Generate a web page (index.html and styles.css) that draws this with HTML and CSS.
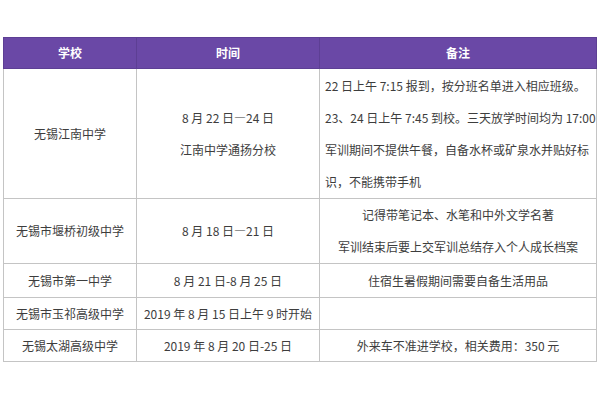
FILE: index.html
```html
<!DOCTYPE html>
<html lang="zh-CN">
<head>
<meta charset="utf-8">
<link rel="stylesheet" href="styles.css">
</head>
<body>
<table class="sched">
  <colgroup>
    <col class="c1"><col class="c2"><col class="c3">
  </colgroup>
  <thead>
    <tr class="head"><th>学校</th><th>时间</th><th>备注</th></tr>
  </thead>
  <tbody>
    <tr class="r1">
      <td>无锡江南中学</td>
      <td class="multi">8 月 22 日—24 日<br>江南中学通扬分校</td>
      <td class="multi left">22 日上午 7:15 报到，按分班名单进入相应班级。<br>23、24 日上午 7:45 到校。三天放学时间均为 17:00<br>军训期间不提供午餐，自备水杯或矿泉水并贴好标<br>识，不能携带手机</td>
    </tr>
    <tr class="r2">
      <td>无锡市堰桥初级中学</td>
      <td>8 月 18 日—21 日</td>
      <td class="multi">记得带笔记本、水笔和中外文学名著<br>军训结束后要上交军训总结存入个人成长档案</td>
    </tr>
    <tr class="r3">
      <td>无锡市第一中学</td>
      <td>8 月 21 日-8 月 25 日</td>
      <td>住宿生暑假期间需要自备生活用品</td>
    </tr>
    <tr class="r4">
      <td>无锡市玉祁高级中学</td>
      <td>2019 年 8 月 15 日上午 9 时开始</td>
      <td></td>
    </tr>
    <tr class="r5">
      <td>无锡太湖高级中学</td>
      <td>2019 年 8 月 20 日-25 日</td>
      <td>外来车不准进学校，相关费用：350 元</td>
    </tr>
  </tbody>
</table>
</body>
</html>
```
FILE: styles.css
```css
html, body {
  margin: 0;
  background: #ffffff;
}
body {
  padding: 37px 4px 0 3px;
  font-family: "Noto Sans CJK SC", "Noto Sans", sans-serif;
  font-size: 12px;
  color: #3d3d3d;
}
.sched {
  border-collapse: collapse;
  table-layout: fixed;
  width: 593px;
}
.c1 { width: 133px; }
.c2 { width: 183px; }
.c3 { width: 277px; }
.sched th, .sched td {
  border: 1px solid #c4c4c4;
  padding: 0;
  text-align: center;
  vertical-align: middle;
  white-space: nowrap;
  line-height: 16px;
}
.sched .head th {
  background: #6a48a6;
  color: #ffffff;
  font-weight: bold;
  height: 30px;
  border-color: #5d3f94;
}
.sched td.multi { line-height: 32px; }
.sched td.left { text-align: left; padding-left: 5px; }
.r1 td { height: 129px; }
.r2 td { height: 63px; }
.r3 td { height: 33px; }
.r4 td { height: 31px; }
.r5 td { height: 31px; }
```
